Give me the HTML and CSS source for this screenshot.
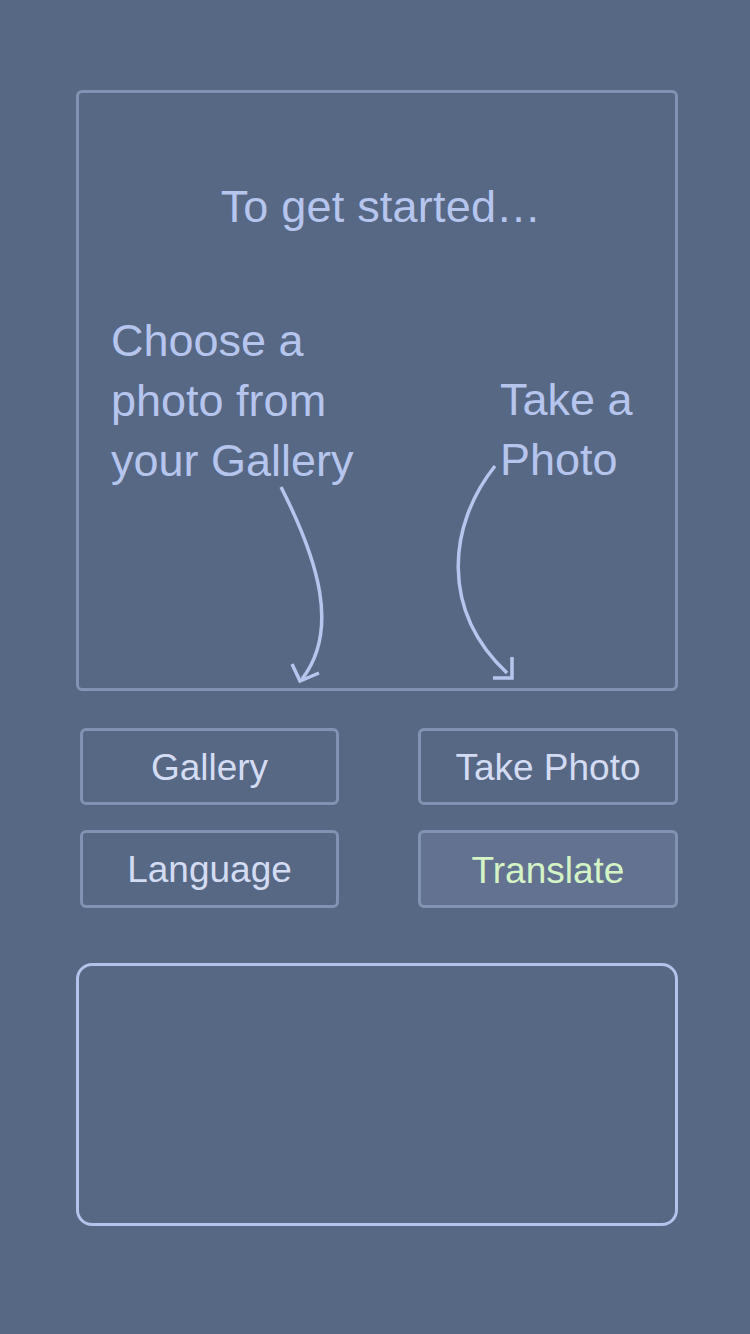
FILE: index.html
```html
<!DOCTYPE html>
<html lang="en">
<head>
<meta charset="utf-8">
<title>Photo Translate</title>
<link rel="stylesheet" href="styles.css">
</head>
<body>
<div class="screen">
  <section class="intro">
    <h1 class="intro-title">To get started…</h1>
    <div class="hints">
      <p class="hint hint-gallery">Choose a<br>photo from<br>your Gallery</p>
      <p class="hint hint-camera">Take a<br>Photo</p>
    </div>
    <svg class="arrows" viewBox="76 90 602 601" width="602" height="601" aria-hidden="true">
      <g fill="none" stroke="#b6c5ee" stroke-width="3.5" stroke-linecap="butt" stroke-linejoin="miter">
        <path d="M281 487 C 318 560, 340 630, 302 679"/>
        <path d="M292 664 L300 681 L319 673"/>
        <path d="M495 466 C 448 525, 440 610, 507 673"/>
        <path d="M493 678 L512 678 L512 657"/>
      </g>
    </svg>
  </section>

  <div class="actions">
    <button class="btn">Gallery</button>
    <button class="btn">Take Photo</button>
    <button class="btn">Language</button>
    <button class="btn btn-primary">Translate</button>
  </div>

  <div class="result"></div>
</div>
</body>
</html>
```
FILE: styles.css
```css
html, body {
  margin: 0;
  padding: 0;
}
body {
  background: #576884;
  width: 750px;
  height: 1334px;
  font-family: "Liberation Sans", Arial, sans-serif;
  color: #b6c5ee;
}
.screen {
  padding: 90px 72px 0 76px;
  display: flex;
  flex-direction: column;
}
.intro {
  position: relative;
  box-sizing: border-box;
  width: 602px;
  height: 601px;
  border: 3px solid #8292b2;
  border-radius: 6px;
  padding: 84px 0 0 32px;
}
.intro-title {
  margin: 0 0 0 -32px;
  padding-left: 8px;
  font-size: 45px;
  font-weight: normal;
  line-height: 60px;
  text-align: center;
  letter-spacing: 0.2px;
}
.hints {
  display: flex;
  margin-top: 74px;
}
.hint {
  margin: 0;
  font-size: 45px;
  line-height: 60px;
}
.hint-gallery {
  width: 389px;
}
.hint-camera {
  margin-top: 59px;
}
.arrows {
  position: absolute;
  left: -3px;
  top: -3px;
  pointer-events: none;
}
.actions {
  display: grid;
  grid-template-columns: 259px 260px;
  column-gap: 79px;
  row-gap: 25px;
  margin: 37px 0 0 4px;
}
.btn {
  box-sizing: border-box;
  height: 77px;
  border: 3px solid #8292b2;
  border-radius: 6px;
  background: transparent;
  color: #d3dcf3;
  font-family: "Liberation Sans", Arial, sans-serif;
  font-size: 37px;
  padding: 2px 0 0;
}
.actions .btn:nth-child(n+3) {
  height: 78px;
}
.btn-primary {
  background: #637290;
  color: #d4f4c6;
  padding-top: 4px;
}
.result {
  box-sizing: border-box;
  width: 602px;
  height: 263px;
  margin-top: 55px;
  border: 3px solid #b3c3eb;
  border-radius: 16px;
}
```
